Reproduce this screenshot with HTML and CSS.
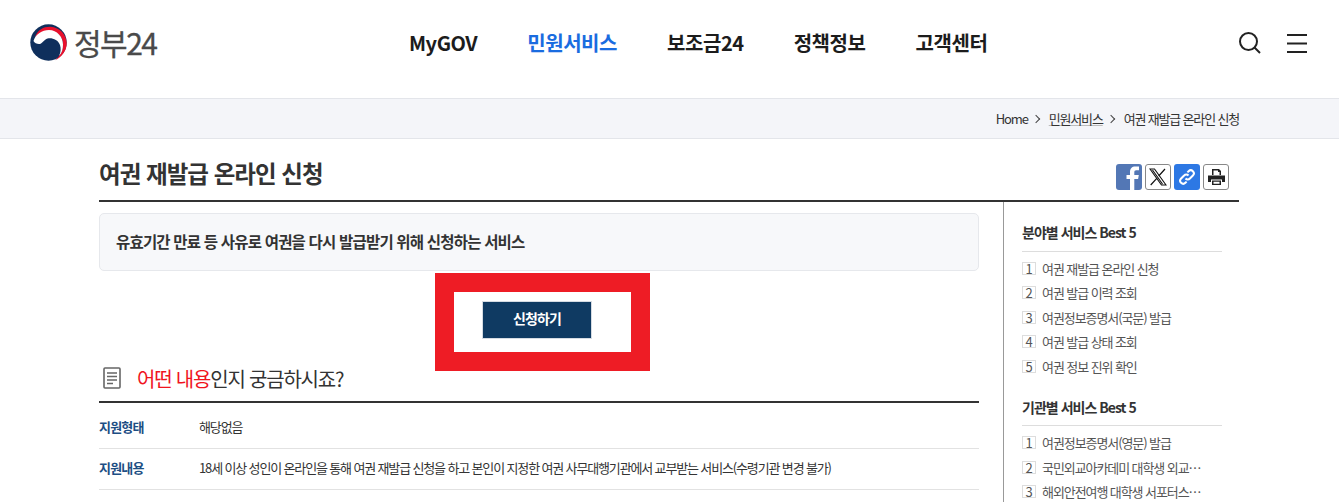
FILE: index.html
```html
<!DOCTYPE html>
<html lang="ko">

<head>
    <meta charset="UTF-8">
    <meta name="viewport" content="width=device-width, initial-scale=1.0">
    <title>여권 재발급 온라인 신청</title>
    <link rel="stylesheet" href="styles.css">
</head>

<body>
    <header class="header">
        <a class="logo">
            <svg class="logo-mark" width="37" height="37" viewBox="0 0 37 37">
                <circle cx="18.500" cy="18.500" r="18.200" fill="#0f2f5c"></circle>
                <path fill="#e8112d" d="M5 13C8 5.500 14 2.500 20.500 2.800 30 3.500 36.500 11 36.700 19 37 26 32 33 25 36.300 30 32 33 27 33 20.500 33 12.500 27 7 19 7 13 7 9 9.500 5 13z"></path>
                <path fill="#fff" d="M3.500 17C5.500 10 12 6 19 6 27 6 33 13 33 20.500 33 25 32 29 29 32 31 28 31 24 30 21 28 15.500 22 13.500 17.500 14.500 14 15.500 13 19 10 20 7.500 20.500 4.500 19 3.500 17z"></path>
            </svg>
            <span class="logo-text">정부24</span>
        </a>
        <nav class="gnb">
            <a>MyGOV</a>
            <a class="on">민원서비스</a>
            <a>보조금24</a>
            <a>정책정보</a>
            <a>고객센터</a>
        </nav>
        <div class="util">
            <svg width="22" height="22" viewBox="0 0 22 22" fill="none" stroke="#222" stroke-width="2">
                <circle cx="9.500" cy="9.500" r="8.500"></circle>
                <path d="M15.500 15.500l5.500 5.500"></path>
            </svg>
            <svg width="20" height="19" viewBox="0 0 20 19" fill="none" stroke="#222" stroke-width="2">
                <path d="M0 1h20M0 9.500h20M0 18h20"></path>
            </svg>
        </div>
    </header>

    <div class="crumb">
        <div class="crumb-in">
            <a>Home</a><i class="arr"></i><a class="line">민원서비스</a><i class="arr"></i><a>여권 재발급 온라인 신청</a>
        </div>
    </div>

    <div class="wrap">
        <div class="title-row">
            <h1>여권 재발급 온라인 신청</h1>
            <div class="share">
                <a class="btn fb">
                    <svg width="26" height="26" viewBox="0 0 26 26"><path fill="#fff" d="M14 26V15h-3.500v-4H14V8c0-3.500 2-5.500 5.300-5.500H23v3.800h-2.700c-1.500 0-2 .9-2 2.100V11h4.500l-.7 4h-3.800v11z"></path></svg>
                </a>
                <a class="btn">
                    <svg width="18" height="18" viewBox="0 0 18 18" fill="none" stroke="#111"><path stroke-width="1.100" d="M1 1h4.500l11.500 16h-4.500zM3.500 2l10 14"></path><path stroke-width="1.200" d="M16 1l-6.300 7M8 10.200L1.700 17"></path></svg>
                </a>
                <a class="btn link">
                    <svg width="18" height="18" viewBox="0 0 18 18" fill="none" stroke="#fff" stroke-width="2"><path d="M7.500 10.500a3 3 0 0 0 4.400 0l3-3a3 3 0 0 0-4.300-4.300l-1.200 1.200"></path><path d="M10.500 7.500a3 3 0 0 0-4.400 0l-3 3a3 3 0 0 0 4.300 4.300l1.200-1.200"></path></svg>
                </a>
                <a class="btn">
                    <svg width="17" height="16" viewBox="0 0 17 16" fill="#222"><path d="M4 0h7l2 2v4h-1.500V3H10V1.500H5.500V6H4z"></path><path d="M0 6.500h17V13h-3v-2.500H3V13H0z"></path><path d="M4 11.500h9V16H4zm1.500 1.300v1.900h6v-1.900z"></path></svg>
                </a>
            </div>
        </div>

        <div class="cols">
            <main class="main">
                <p class="summary">유효기간 만료 등 사유로 여권을 다시 발급받기 위해 신청하는 서비스</p>
                <div class="apply"><a class="apply-btn">신청하기</a></div>

                <h2 class="sub">
                    <svg width="18" height="22" viewBox="0 0 18 22" fill="none" stroke="#666">
                        <rect x="1" y="1" width="16" height="20" rx="1" stroke-width="1.600"></rect>
                        <path stroke-width="1.400" d="M4 6h10M4 9.500h10M4 13h10M4 16.500h6"></path>
                    </svg>
                    <span><em>어떤 내용</em>인지 궁금하시죠?</span>
                </h2>
                <dl class="info">
                    <div class="info-row">
                        <dt>지원형태</dt>
                        <dd>해당없음</dd>
                    </div>
                    <div class="info-row">
                        <dt>지원내용</dt>
                        <dd>18세 이상 성인이 온라인을 통해 여권 재발급 신청을 하고 본인이 지정한 여권 사무대행기관에서 교부받는 서비스(수령기관 변경 불가)</dd>
                    </div>
                </dl>
            </main>

            <aside class="side">
                <h3>분야별 서비스 Best 5</h3>
                <ol class="best">
                    <li><b>1</b><span>여권 재발급 온라인 신청</span></li>
                    <li><b>2</b><span>여권 발급 이력 조회</span></li>
                    <li><b>3</b><span>여권정보증명서(국문) 발급</span></li>
                    <li><b>4</b><span>여권 발급 상태 조회</span></li>
                    <li><b>5</b><span>여권 정보 진위 확인</span></li>
                </ol>
                <h3 class="next">기관별 서비스 Best 5</h3>
                <ol class="best">
                    <li><b>1</b><span>여권정보증명서(영문) 발급</span></li>
                    <li><b>2</b><span>국민외교아카데미 대학생 외교…</span></li>
                    <li><b>3</b><span>해외안전여행 대학생 서포터스…</span></li>
                </ol>
            </aside>
        </div>
    </div>

    <div class="mark"></div>
</body>

</html>
```

FILE: styles.css
```css
html, body {
    margin: 0;
    padding: 0;
    height: 502px;
    overflow: hidden;
    background: #fff;
}
body {
    position: relative;
    font-family: "Noto Sans CJK KR", "Noto Sans", sans-serif;
    color: #222;
    letter-spacing: -0.05em;
}
h1, h2, h3, p, dl, dd, ol {
    margin: 0;
    padding: 0;
}

/* header */
.header {
    display: flex;
    align-items: flex-start;
    height: 98px;
    box-sizing: border-box;
    padding: 24px 32px 0 30px;
}
.logo {
    display: flex;
    align-items: center;
    gap: 7px;
    width: 379px;
    height: 37px;
    flex: none;
}
.logo-text {
    font-size: 30px;
    line-height: 37px;
    color: #4a4a4a;
    letter-spacing: -0.05em;
    -webkit-text-stroke: 0.3px #4a4a4a;
}
.gnb {
    display: flex;
    gap: 50px;
    margin-top: -1px;
    font-size: 20px;
    font-weight: 700;
    line-height: 40px;
    letter-spacing: -0.022em;
    color: #1c1c1c;
}
.gnb .on {
    color: #1a6ce0;
}
.util {
    display: flex;
    align-items: center;
    gap: 26px;
    margin-left: auto;
    height: 38px;
}

/* breadcrumb */
.crumb {
    height: 39px;
    background: #f4f5f9;
    border-top: 1px solid #e3e5ea;
    border-bottom: 1px solid #e3e5ea;
}
.crumb-in {
    display: flex;
    align-items: center;
    justify-content: flex-end;
    width: 1140px;
    height: 39px;
    margin-left: 99px;
    font-size: 13px;
    color: #333;
    letter-spacing: -0.09em;
}
.arr {
    width: 5px;
    height: 5px;
    margin: 0 10px 0 5px;
    border-top: 1px solid #444;
    border-right: 1px solid #444;
    transform: rotate(45deg);
}
.line {
    text-decoration: underline;
    text-decoration-color: #bbb;
}

/* page */
.wrap {
    width: 1140px;
    margin-left: 99px;
}
.title-row {
    display: flex;
    align-items: center;
    justify-content: space-between;
    height: 61px;
    border-bottom: 2px solid #333;
}
h1 {
    font-size: 23.500px;
    font-weight: 700;
    color: #333;
    letter-spacing: -0.04em;
    margin-top: 6px;
}
.share {
    display: flex;
    gap: 3px;
    margin-right: 10px;
    margin-top: 14px;
}
.btn {
    display: flex;
    align-items: center;
    justify-content: center;
    width: 26px;
    height: 26px;
    box-sizing: border-box;
    border: 1px solid #888;
    border-radius: 3px;
    background: #fff;
    overflow: hidden;
}
.btn.fb {
    background: #5377b5;
    border: 0;
}
.btn.link {
    background: #2d78e4;
    border: 0;
}
.cols {
    display: flex;
    align-items: flex-start;
}
.main {
    flex: none;
    width: 880px;
    padding-top: 11px;
}
.summary {
    height: 58px;
    box-sizing: border-box;
    padding-left: 16px;
    font-size: 15.500px;
    font-weight: 700;
    line-height: 55px;
    color: #333;
    background: #f7f8fa;
    border: 1px solid #e6e8ec;
    border-radius: 5px;
    letter-spacing: -0.052em;
}
.apply {
    display: flex;
    justify-content: center;
    margin-top: 30px;
    padding-right: 4px;
}
.apply-btn {
    width: 110px;
    height: 38px;
    box-sizing: border-box;
    font-size: 14px;
    font-weight: 700;
    line-height: 33px;
    text-align: center;
    color: #fff;
    background: #0f3a62;
    border: 1px solid #d5dbe2;
    letter-spacing: -0.06em;
}
.sub {
    display: flex;
    align-items: center;
    gap: 16px;
    height: 64px;
    box-sizing: border-box;
    padding: 16px 0 0 4px;
    font-size: 20px;
    font-weight: 400;
    color: #333;
    letter-spacing: -0.06em;
    border-bottom: 2px solid #333;
}
.sub em {
    font-style: normal;
    color: #f0141e;
}
.info {
    padding-top: 5px;
    font-size: 13px;
    line-height: 37px;
    color: #333;
    letter-spacing: -0.088em;
}
.info-row {
    display: flex;
    height: 40px;
    border-bottom: 1px solid #e2e2e2;
}
.info dt {
    width: 100px;
    font-weight: 700;
    color: #1d4e84;
    letter-spacing: -0.06em;
}

/* side */
.side {
    flex: none;
    width: 200px;
    height: 302px;
    margin-left: 24px;
    padding: 0 17px 0 18px;
    border-left: 1px solid #999;
}
.side h3 {
    height: 39px;
    margin-top: 10px;
    font-size: 14px;
    font-weight: 700;
    line-height: 40px;
    color: #333;
    letter-spacing: -0.07em;
    border-bottom: 1px solid #ddd;
}
.side h3.next {
    height: 36px;
    line-height: 36px;
}
.best {
    list-style: none;
    padding-top: 4px;
}
.next + .best {
    padding-top: 5px;
}
.best li {
    display: flex;
    align-items: center;
    gap: 6px;
    height: 24.500px;
    font-size: 13px;
    color: #555;
    letter-spacing: -0.083em;
}
.best b {
    width: 12px;
    height: 11px;
    font-weight: 400;
    line-height: 11px;
    text-align: center;
    letter-spacing: 0;
    border: 1px solid #ddd;
}

/* annotation over the button */
.mark {
    position: absolute;
    left: 435px;
    top: 273px;
    width: 177px;
    height: 60px;
    border: 19px solid #ee1c25;
}
```
